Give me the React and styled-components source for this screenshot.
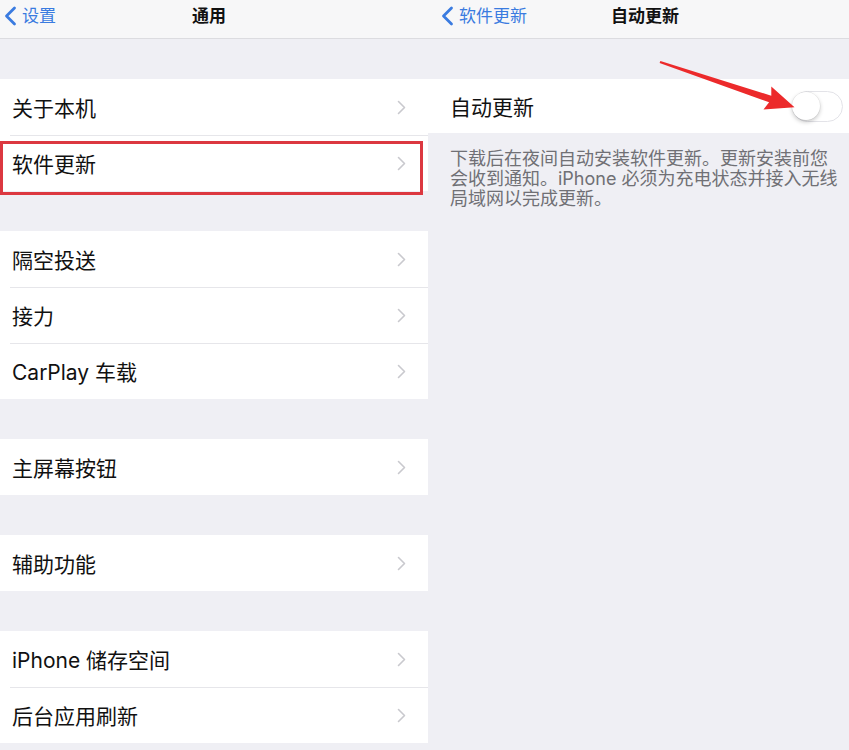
import React from 'react'
import styled, { createGlobalStyle } from 'styled-components'

const Global = createGlobalStyle`
  html, body {
    margin: 0;
    padding: 0;
    background: #efeff4;
  }
  body {
    font-family: "Inter", "Noto Sans CJK SC", sans-serif;
    -webkit-font-smoothing: antialiased;
  }
`

const leftGroups = [
  ['关于本机', '软件更新'],
  ['隔空投送', '接力', 'CarPlay 车载'],
  ['主屏幕按钮'],
  ['辅助功能'],
  ['iPhone 储存空间', '后台应用刷新'],
]

const Chevron = () => (
  <svg width="9" height="15" viewBox="0 0 9 15">
    <path d="M1.5 1.5 L7.5 7.5 L1.5 13.5" fill="none" stroke="#c9c9ce" strokeWidth="1.6" strokeLinecap="round" strokeLinejoin="round" />
  </svg>
)

const BackChevron = () => (
  <svg width="13" height="20" viewBox="0 0 13 20">
    <path d="M10.5 2 L2.5 10 L10.5 18" fill="none" stroke="#3a7be0" strokeWidth="2.8" strokeLinecap="round" strokeLinejoin="round" />
  </svg>
)

const App = () => {
  return (
    <>
      <Global />
      <Page>
        <Column>
          <NavBar $shift={-10}>
            <BackLink $inset={4}>
              <BackChevron />
              <span>设置</span>
            </BackLink>
            <Title>通用</Title>
            <span />
          </NavBar>
          <List>
            {leftGroups.map((group, gi) => (
              <Group key={gi}>
                {group.map((label, i) => (
                  <Row key={label} $divider={i > 0}>
                    <Label>{label}</Label>
                    <Chevron />
                    {label === '软件更新' && <Highlight />}
                  </Row>
                ))}
              </Group>
            ))}
          </List>
        </Column>

        <Column>
          <NavBar $shift={13}>
            <BackLink $inset={0}>
              <BackChevron />
              <span>软件更新</span>
            </BackLink>
            <Title>自动更新</Title>
            <span />
          </NavBar>
          <List>
            <Group>
              <Row $tight>
                <Label $indent={22}>自动更新</Label>
                <Switch>
                  <Knob />
                </Switch>
              </Row>
            </Group>
            <Footer>
              下载后在夜间自动安装软件更新。更新安装前您<br />
              会收到通知。iPhone 必须为充电状态并接入无线<br />
              局域网以完成更新。
            </Footer>
          </List>
        </Column>

        <Arrow viewBox="0 0 849 750" width="849" height="750">
          <polygon
            points="660.4,60.9 771.3,95.7 771.3,86.6 794.5,107.2 763.5,109.4 769.1,102.3 659.6,63.1"
            fill="#ec2a2b"
          />
        </Arrow>
      </Page>
    </>
  )
}

export default App

const Page = styled.div`
  position: relative;
  width: 849px;
  height: 750px;
  overflow: hidden;
  display: grid;
  grid-template-columns: 428px 1fr;
  background: #efeff4;
`

const Column = styled.div`
  display: flex;
  flex-direction: column;
  min-width: 0;
`

const NavBar = styled.div`
  height: 39px;
  box-sizing: border-box;
  padding-bottom: 6px;
  padding-left: ${p => (p.$shift > 0 ? p.$shift : 0)}px;
  padding-right: ${p => (p.$shift < 0 ? -p.$shift : 0)}px;
  display: grid;
  grid-template-columns: 1fr auto 1fr;
  align-items: center;
  background: #f7f7f8;
  border-bottom: 1px solid #dcdce0;
`

const BackLink = styled.div`
  display: flex;
  align-items: center;
  gap: 5px;
  padding-left: ${p => p.$inset}px;
  color: #3a7be0;
  font-size: 17px;
  span {
    line-height: 1;
  }
`

const Title = styled.div`
  font-size: 17px;
  font-weight: 700;
  color: #111;
  line-height: 1;
`

const List = styled.div`
  display: flex;
  flex-direction: column;
  gap: 40px;
  padding-top: 40px;
`

const Group = styled.div`
  background: #fff;
  display: flex;
  flex-direction: column;
`

const Row = styled.div`
  position: relative;
  height: ${p => (p.$tight ? 54 : 56)}px;
  display: flex;
  align-items: center;
  justify-content: space-between;
  padding-right: ${p => (p.$tight ? 6 : 22)}px;
  &::before {
    content: '';
    display: ${p => (p.$divider ? 'block' : 'none')};
    position: absolute;
    top: 0;
    left: 10px;
    right: 0;
    height: 1px;
    background: #e6e6ea;
  }
  svg {
    flex: none;
  }
`

const Label = styled.span`
  padding-left: ${p => p.$indent || 12}px;
  font-size: 21px;
  color: #111;
  white-space: nowrap;
`

const Highlight = styled.div`
  position: absolute;
  left: 0;
  right: 5px;
  top: 6px;
  bottom: -4px;
  border: 3px solid #dc3840;
  pointer-events: none;
`

const Switch = styled.div`
  width: 51px;
  height: 31px;
  box-sizing: border-box;
  border-radius: 16px;
  border: 1.5px solid #e3e3e8;
  background: #fff;
  position: relative;
`

const Knob = styled.div`
  position: absolute;
  left: -1px;
  top: 0px;
  width: 28px;
  height: 28px;
  border-radius: 50%;
  background: #fff;
  box-shadow: 0 2px 4px rgba(0, 0, 0, 0.22), 0 0 0 0.5px rgba(0, 0, 0, 0.08);
`

const Footer = styled.p`
  margin: -24px 0 0;
  padding-left: 22px;
  font-size: 18px;
  line-height: 20px;
  color: #707075;
  white-space: nowrap;
`

const Arrow = styled.svg`
  position: absolute;
  left: 0;
  top: 0;
  pointer-events: none;
`
